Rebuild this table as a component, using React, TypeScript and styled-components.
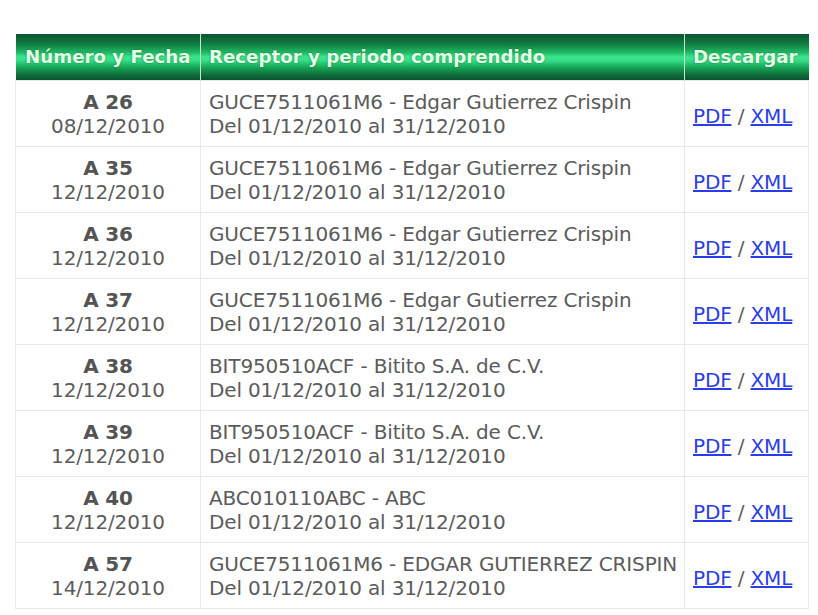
import React from "react";
import styled, { createGlobalStyle } from "styled-components";

const Global = createGlobalStyle`
  html, body { margin: 0; padding: 0; background: #ffffff; }
  body { font-family: "DejaVu Sans", Verdana, sans-serif; }
`;

const Page = styled.div`
  padding: 34px 10px 0 15px;
`;

const Table = styled.table`
  border-collapse: collapse;
  width: 793px;
  table-layout: fixed;
  font-family: "DejaVu Sans", Verdana, sans-serif;
`;

const HeadCell = styled.th<{ $center?: boolean }>`
  box-sizing: border-box;
  height: 46px;
  padding: 0 0 0 8px;
  text-align: ${(p) => (p.$center ? "center" : "left")};
  color: #e4ffe6;
  font-size: 18.2px;
  font-weight: bold;
  white-space: nowrap;
  overflow: hidden;
  background: linear-gradient(
    to bottom,
    #0d5530 0%,
    #107c40 22%,
    #1fb864 40%,
    #3be58e 50%,
    #35dc86 58%,
    #18a85a 72%,
    #0e6e3a 88%,
    #0b5230 100%
  );
  border-left: 1px solid #c8e8d0;
  text-shadow: 0 0 2px rgba(0, 60, 20, 0.6);
  &:first-child { border-left: none; padding: 0; }
`;

const Row = styled.tr`
  height: 66px;
`;

const Cell = styled.td<{ $center?: boolean }>`
  border: 1px solid #e6eaee;
  padding: 2px 0 0 8px;
  vertical-align: middle;
  text-align: ${(p) => (p.$center ? "center" : "left")};
  color: #5b5b5b;
  font-size: 20px;
  letter-spacing: -0.15px;
  line-height: 24px;
  white-space: nowrap;
  &:first-child { padding: 2px 0 0 0; }
`;

const Folio = styled.div`
  font-weight: bold;
  color: #545454;
`;

const Links = styled.div`
  padding-top: 3px;
`;

const Link = styled.a`
  color: #2a3ee6;
  text-decoration: underline;
`;

const Sep = styled.span`
  color: #5b5b5b;
`;

const rows = [
  ["A 26", "08/12/2010", "GUCE7511061M6 - Edgar Gutierrez Crispin"],
  ["A 35", "12/12/2010", "GUCE7511061M6 - Edgar Gutierrez Crispin"],
  ["A 36", "12/12/2010", "GUCE7511061M6 - Edgar Gutierrez Crispin"],
  ["A 37", "12/12/2010", "GUCE7511061M6 - Edgar Gutierrez Crispin"],
  ["A 38", "12/12/2010", "BIT950510ACF - Bitito S.A. de C.V."],
  ["A 39", "12/12/2010", "BIT950510ACF - Bitito S.A. de C.V."],
  ["A 40", "12/12/2010", "ABC010110ABC - ABC"],
  ["A 57", "14/12/2010", "GUCE7511061M6 - EDGAR GUTIERREZ CRISPIN"],
];

export default function App() {
  return (
    <>
      <Global />
      <Page>
        <Table>
          <colgroup>
            <col style={{ width: 185 }} />
            <col style={{ width: 484 }} />
            <col style={{ width: 124 }} />
          </colgroup>
          <thead>
            <tr>
              <HeadCell $center>Número y Fecha</HeadCell>
              <HeadCell>Receptor y periodo comprendido</HeadCell>
              <HeadCell>Descargar</HeadCell>
            </tr>
          </thead>
          <tbody>
            {rows.map(([folio, fecha, receptor]) => (
              <Row key={folio}>
                <Cell $center>
                  <Folio>{folio}</Folio>
                  <div>{fecha}</div>
                </Cell>
                <Cell>
                  <div>{receptor}</div>
                  <div>Del 01/12/2010 al 31/12/2010</div>
                </Cell>
                <Cell>
                  <Links>
                    <Link href="#">PDF</Link> <Sep>/</Sep> <Link href="#">XML</Link>
                  </Links>
                </Cell>
              </Row>
            ))}
          </tbody>
        </Table>
      </Page>
    </>
  );
}
